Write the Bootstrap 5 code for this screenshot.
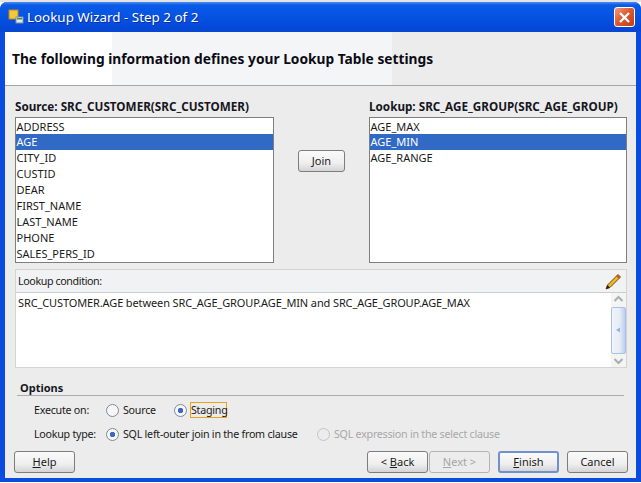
<!DOCTYPE html>
<html lang="en">
<head>
<meta charset="UTF-8">
<title>Lookup Wizard - Step 2 of 2</title>
<link href="https://cdn.jsdelivr.net/npm/bootstrap@5.3.0/dist/css/bootstrap.min.css" rel="stylesheet">
<style>
html, body { margin: 0; background: #fff; }
body { width: 641px; height: 483px; overflow: hidden; font-family: "Noto Sans", "Liberation Sans", sans-serif; font-size: 11px; line-height: 16px; color: #1a1a1a; }
.wiz-top { height: 2px; background: #e4e4e4; }
.wiz-window { height: 480px; background: #0a4be0; border-radius: 7px 7px 0 0; padding: 0 5px 4px 5px; }
.wiz-title { height: 30px; margin: 0 -5px; padding: 0 6px 0 8px; color: #fff; font-size: 13.4px; border-radius: 7px 7px 0 0;
  background: linear-gradient(180deg, #4a8cf5 0, #0a5ae6 3px, #0655e4 12px, #0448d8 26px, #0a46d0 30px); }
.wiz-title-text { text-shadow: 1px 1px 0 #0a2f9c; margin-left: 3px; }
.wiz-close { width: 21px; height: 20px; border: 1px solid #fff; border-radius: 3px; background: linear-gradient(135deg, #ef9c7c, #de5a32 45%, #c23c14); padding: 0; }
.wiz-body { height: 446px; background: #ececec; }
.wiz-head { height: 54px; padding-left: 7px; border-bottom: 1px solid #a6a6a6; font-size: 13.75px; font-weight: 700; color: #0b0b14;
  background: linear-gradient(90deg, #fff 0, #fff 107px, #f4f5f7 107px, #f4f5f7 387px, #ececec 387px); }
.wiz-pickers { padding: 13px 9px 0 10px; height: 183px; }
.wiz-col-left { width: 259px; }
.wiz-col-right { width: 258px; }
.wiz-col-mid { width: 95px; padding-top: 51px; }
.wiz-label { font-size: 11.7px; font-weight: 700; height: 18px; line-height: 14px; white-space: nowrap; color: #16161e; }
.wiz-list.list-group { height: 146px; padding-top: 1px; border: 1px solid #7f7f7f; border-radius: 0; background: #fff; overflow: hidden; }
.wiz-list .list-group-item { border: 0; padding: 0 0 0 .5px; height: 16px; flex: none; line-height: 15px; font-size: 11px; color: #1a1a1a; background: transparent; }
.wiz-list .list-group-item.active { background: #316ac5; color: #fff; }
.wiz-btn.btn { width: 61px; height: 22px; padding: 0; font-size: 11px; line-height: 20px; color: #1a1a1a; border: 1px solid #7d7d7d; border-radius: 3px; background: linear-gradient(180deg, #fafafa, #efefef 60%, #d4d4d4); }
.wiz-btn.btn.wiz-join { width: 47px; }
.wiz-btn.btn.wiz-default { border: 2px solid #6f92cc; line-height: 18px; }
.wiz-btn.btn:disabled { opacity: 1; color: #a6a6a6; border-color: #b4b4b4; background: #ececec; }
.wiz-btn.wiz-next { margin-left: 1px; }
.wiz-cond { margin: 0 9px 0 10px; height: 99px; border: 1px solid #d4d4d4; }
.wiz-cond-head { height: 23px; padding: 0 4px 0 2px; background: #f1f2f4; border-bottom: 1px solid #cdcdcd; font-size: 10.7px; letter-spacing: -.38px; }
.wiz-cond-main { background: #fff; height: 74px; }
.wiz-cond-text { padding: 2px 0 0 2px; white-space: nowrap; letter-spacing: -.12px; }
.wiz-scroll { width: 15px; background: #f4f4f0; }
.wiz-thumb { height: 47px; border: 1px solid #a9c0e8; border-radius: 2px; background: linear-gradient(90deg, #f2f5fb, #e6ebf5 60%, #bccfef); }
.wiz-options { padding: 13px 12px 0 12px; }
.wiz-options-title { font-weight: 700; margin-left: 3px; height: 14px; line-height: 14px; color: #16161e; }
.wiz-rule { border-top: 1px solid #ababab; margin-bottom: 2px; }
.wiz-opt-row { height: 24px; padding-left: 17px; white-space: nowrap; font-size: 10.7px; letter-spacing: -.25px; }
.wiz-opt-label { width: 72px; }
.wiz-opt-src { width: 51px; }
.wiz-opt-sql { width: 194px; }
.wiz-radio.form-check-input { width: 13px; height: 13px; margin: 0 4px 0 0; border: 1px solid #7f8a96; background-color: #f6f6f6; float: none; flex: none; }
.wiz-radio.form-check-input:checked { background-color: #f6f6f6; border-color: #7f8a96; background-image: radial-gradient(circle, #3a68c4 0 2.4px, transparent 3px); }
.wiz-radio.form-check-input:disabled { opacity: 1; border-color: #c4c4c4; background-color: #ececec; }
.wiz-opt-off { color: #a8a8a8; }
.wiz-focus { border: 1px solid #e8a317; height: 16px; width: 37px; margin-left: -1px; line-height: 14px; }
.wiz-foot { padding: 5px 8px 0 9px; }
.wiz-bottom { height: 1px; background: #fff; }
</style>
</head>
<body>
<div class="wiz-top"></div>
<div class="wiz-window">
  <div class="wiz-title d-flex align-items-center">
    <svg width="16" height="16" viewBox="0 0 16 16">
      <rect x="1" y="1" width="9" height="9" fill="#f4c83c" stroke="#b98a14"/>
      <rect x="8" y="8" width="7" height="6" fill="#e8e8e8" stroke="#7c8fa8"/>
      <rect x="9" y="9" width="5" height="1.5" fill="#3f8f4a"/>
    </svg>
    <span class="wiz-title-text flex-grow-1">Lookup Wizard - Step 2 of 2</span>
    <button class="wiz-close d-flex align-items-center justify-content-center" type="button" aria-label="Close">
      <svg width="13" height="13" viewBox="0 0 13 13"><path d="M2 2 11 11M11 2 2 11" stroke="#fff" stroke-width="2.4" fill="none"/></svg>
    </button>
  </div>
  <div class="wiz-body">
    <div class="wiz-head d-flex align-items-center">The following information defines your Lookup Table settings</div>

    <div class="wiz-pickers d-flex">
      <div class="wiz-col-left">
        <div class="wiz-label">Source: SRC_CUSTOMER(SRC_CUSTOMER)</div>
        <ul class="wiz-list list-group">
          <li class="list-group-item">ADDRESS</li>
          <li class="list-group-item active">AGE</li>
          <li class="list-group-item">CITY_ID</li>
          <li class="list-group-item">CUSTID</li>
          <li class="list-group-item">DEAR</li>
          <li class="list-group-item">FIRST_NAME</li>
          <li class="list-group-item">LAST_NAME</li>
          <li class="list-group-item">PHONE</li>
          <li class="list-group-item">SALES_PERS_ID</li>
        </ul>
      </div>
      <div class="wiz-col-mid d-flex justify-content-center">
        <button class="wiz-btn wiz-join btn" type="button">Join</button>
      </div>
      <div class="wiz-col-right">
        <div class="wiz-label">Lookup: SRC_AGE_GROUP(SRC_AGE_GROUP)</div>
        <ul class="wiz-list list-group">
          <li class="list-group-item">AGE_MAX</li>
          <li class="list-group-item active">AGE_MIN</li>
          <li class="list-group-item">AGE_RANGE</li>
        </ul>
      </div>
    </div>

    <div class="wiz-cond">
      <div class="wiz-cond-head d-flex align-items-center justify-content-between">
        <span>Lookup condition:</span>
        <svg width="17" height="17" viewBox="0 0 17 17">
          <path d="M1 16 2.5 12 13 1.5 15.5 4 5 14.5z" fill="#f0b429" stroke="#5a3a10" stroke-width=".9"/>
          <path d="M12 2.5 14.5 5" stroke="#c9541c" stroke-width="2"/>
          <path d="M1 16 2.5 12 5 14.5z" fill="#2a2016"/>
        </svg>
      </div>
      <div class="wiz-cond-main d-flex">
        <div class="wiz-cond-text flex-grow-1">SRC_CUSTOMER.AGE between SRC_AGE_GROUP.AGE_MIN and SRC_AGE_GROUP.AGE_MAX</div>
        <div class="wiz-scroll d-flex flex-column justify-content-between align-items-stretch">
          <svg width="15" height="12" viewBox="0 0 15 12"><path d="M3.5 8 7.5 4l4 4" stroke="#a7aeb8" stroke-width="2" fill="none"/></svg>
          <div class="wiz-thumb d-flex align-items-center justify-content-center">
            <svg width="7" height="8" viewBox="0 0 7 8"><path d="M1 4 5 1.5v5z" fill="#8fb2ea"/></svg>
          </div>
          <svg width="15" height="12" viewBox="0 0 15 12"><path d="M3.5 4l4 4 4-4" stroke="#a7aeb8" stroke-width="2" fill="none"/></svg>
        </div>
      </div>
    </div>

    <div class="wiz-options">
      <div class="wiz-options-title">Options</div>
      <div class="wiz-rule"></div>
      <div class="wiz-opt-row d-flex align-items-center">
        <span class="wiz-opt-label">Execute on:</span>
        <input class="wiz-radio form-check-input" type="radio" name="execOn" aria-label="Source">
        <span class="wiz-opt-src">Source</span>
        <input class="wiz-radio form-check-input" type="radio" name="execOn" aria-label="Staging" checked>
        <span class="wiz-focus">Staging</span>
      </div>
      <div class="wiz-opt-row d-flex align-items-center">
        <span class="wiz-opt-label">Lookup type:</span>
        <input class="wiz-radio form-check-input" type="radio" name="lookupType" aria-label="SQL left-outer join" checked>
        <span class="wiz-opt-sql">SQL left-outer join in the from clause</span>
        <input class="wiz-radio form-check-input" type="radio" name="lookupType" aria-label="SQL expression" disabled>
        <span class="wiz-opt-off">SQL expression in the select clause</span>
      </div>
    </div>

    <div class="wiz-foot d-flex">
      <button class="wiz-btn btn" type="button"><u>H</u>elp</button>
      <div class="ms-auto d-flex">
        <button class="wiz-btn btn" type="button">&lt; <u>B</u>ack</button>
        <button class="wiz-btn btn wiz-next" type="button" disabled><u>N</u>ext &gt;</button>
        <button class="wiz-btn wiz-default btn ms-2" type="button"><u>F</u>inish</button>
        <button class="wiz-btn btn ms-2" type="button">Cancel</button>
      </div>
    </div>
  </div>
</div>
<div class="wiz-bottom"></div>
<script src="https://cdn.jsdelivr.net/npm/bootstrap@5.3.0/dist/js/bootstrap.bundle.min.js"></script>
</body>
</html>
